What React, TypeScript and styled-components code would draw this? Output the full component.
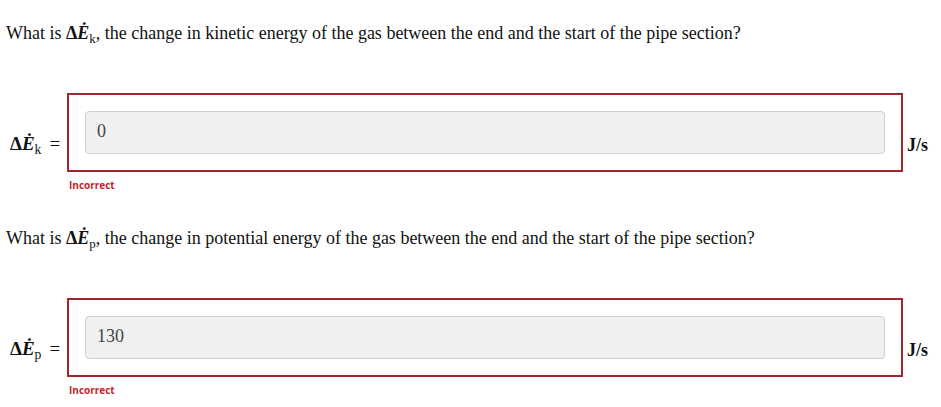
import React from "react";
import styled, { createGlobalStyle } from "styled-components";

const GlobalStyle = createGlobalStyle`
  html, body { margin: 0; padding: 0; background: #ffffff; }
  body { font-family: "Liberation Serif", "Times New Roman", serif; color: #111; }
`;

const Page = styled.div`
  padding: 23px 8px 0 6px;
  display: flex;
  flex-direction: column;
`;

const Section = styled.section<{ $first?: boolean }>`
  display: flex;
  flex-direction: column;
  margin-top: ${(p) => (p.$first ? "0" : "36px")};
`;

const Question = styled.p`
  margin: 0;
  font-size: 18px;
  line-height: 20px;
  color: #111;
`;

const Row = styled.div`
  display: flex;
  align-items: flex-end;
  margin-top: 50px;
`;

const Label = styled.div`
  width: 57px;
  padding-left: 4px;
  margin-bottom: 17px;
  font-size: 19px;
  line-height: 22px;
  white-space: nowrap;
`;

const Delta = styled.span`
  font-weight: bold;
`;

const Sym = styled.span`
  font-style: italic;
  font-weight: bold;
`;

const Sub = styled.span`
  font-size: 0.72em;
  line-height: 0;
  position: relative;
  top: 0.28em;
  font-style: normal;
  font-weight: normal;
`;

const Eq = styled.span`
  margin-left: 8px;
`;

const AnswerBox = styled.div`
  flex: 1;
  border: 2px solid #a0282e;
  padding: 16px;
  box-sizing: border-box;
  height: 79px;
`;

const Field = styled.input`
  display: block;
  width: 100%;
  height: 43px;
  box-sizing: border-box;
  background: #f0f0f0;
  border: 1px solid #cfcfcf;
  border-radius: 4px;
  padding: 0 11px 2px;
  font-family: "Liberation Serif", "Times New Roman", serif;
  font-size: 18px;
  color: #444;
  outline: none;
`;

const Unit = styled.div`
  width: 26px;
  margin-left: 4px;
  margin-bottom: 17px;
  font-size: 18px;
  line-height: 20px;
  font-weight: bold;
`;

const Feedback = styled.div`
  margin: 6px 0 0 63px;
  font-family: "Open Sans", "Liberation Sans", sans-serif;
  font-weight: 700;
  font-size: 10px;
  line-height: 14px;
  color: #c0272d;
`;

type MathProps = { sub: string };

const EDot = ({ sub }: MathProps) => (
  <>
    <Delta>Δ</Delta>
    <Sym>Ė</Sym>
    <Sub>{sub}</Sub>
  </>
);

type Item = { sub: string; kind: string; value: string };

const items: Item[] = [
  { sub: "k", kind: "kinetic", value: "0" },
  { sub: "p", kind: "potential", value: "130" },
];

export default function App() {
  return (
    <>
      <GlobalStyle />
      <Page>
        {items.map((it, i) => (
          <Section key={it.sub} $first={i === 0}>
            <Question>
              What is <EDot sub={it.sub} />, the change in {it.kind} energy of the gas between the end and the
              start of the pipe section?
            </Question>
            <Row>
              <Label>
                <EDot sub={it.sub} />
                <Eq>=</Eq>
              </Label>
              <AnswerBox>
                <Field readOnly value={it.value} />
              </AnswerBox>
              <Unit>J/s</Unit>
            </Row>
            <Feedback>Incorrect</Feedback>
          </Section>
        ))}
      </Page>
    </>
  );
}
